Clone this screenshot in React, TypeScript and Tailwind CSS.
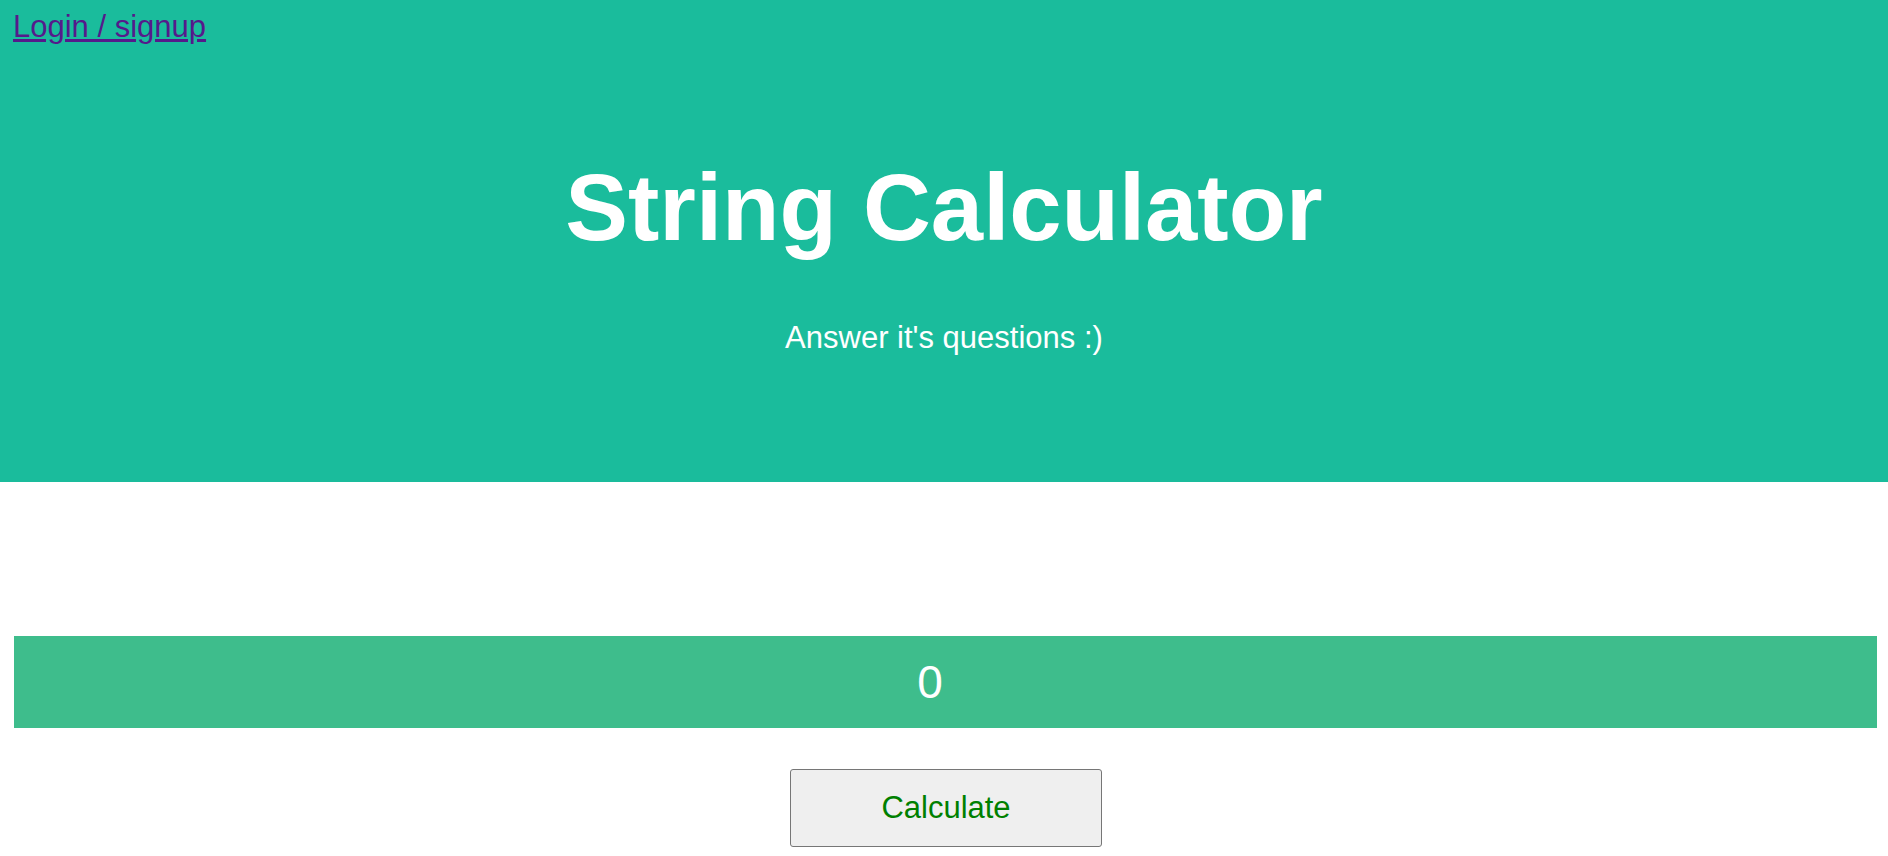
import React, { useState } from "react";

const App: React.FC = () => {
  const [result, setResult] = useState(0);

  return (
    <div className="min-h-screen bg-white font-['Liberation_Sans',Arial,sans-serif]">
      {/* Header */}
      <header className="h-[482px] bg-[#1abc9c] pt-[9px]">
        <a href="#" className="ml-[13px] text-[31px] leading-[35px] text-[#551a8b] underline">
          Login / signup
        </a>
        <h1 className="mt-[114px] text-center text-[94px] font-bold leading-[100px] text-white">
          String Calculator
        </h1>
        <p className="mt-[62px] text-center text-[31px] leading-[36px] text-white">
          Answer it's questions :)
        </p>
      </header>

      {/* Result */}
      <div className="mt-[154px] ml-[14px] mr-[11px] flex h-[92px] items-center justify-center bg-[#3ebd8c] pr-[31px] text-[46px] text-white">
        {result}
      </div>

      <div className="mt-[41px] flex justify-center pl-[4px]">
        <button
          onClick={() => setResult(0)}
          className="h-[78px] w-[312px] rounded-[3px] border border-[#767676] bg-[#efefef] text-[31px] text-[#008000]"
        >
          Calculate
        </button>
      </div>
    </div>
  );
};

export default App;
